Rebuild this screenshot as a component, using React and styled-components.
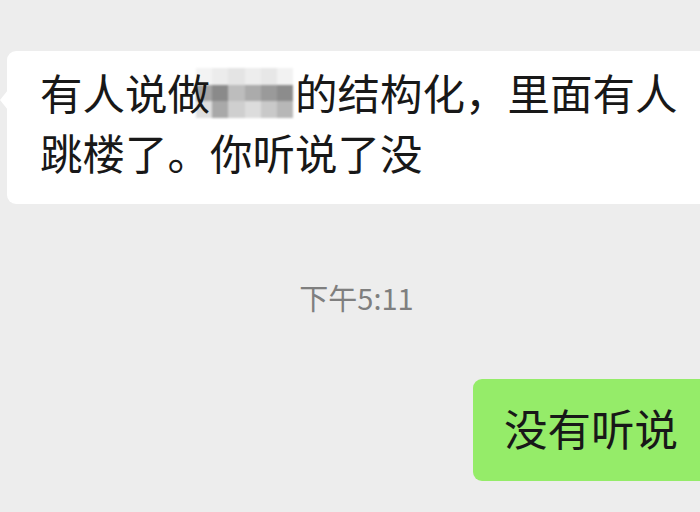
import React from "react"
import styled, { createGlobalStyle } from "styled-components"

const GlobalStyle = createGlobalStyle`
  html, body {
    margin: 0;
    background: #ededed;
  }
  #root {
    width: 700px;
    height: 512px;
    overflow: hidden;
  }
`

const Chat = styled.div`
  font-family: "Noto Sans CJK SC", "Noto Sans", sans-serif;
  padding-top: 51px;
  display: flex;
  flex-direction: column;
`

const Row = styled.div`
  display: flex;
  justify-content: ${(p) => (p.$mine ? "flex-end" : "flex-start")};
  margin-right: ${(p) => (p.$mine ? "-9px" : "0")};
`

const Bubble = styled.div`
  position: relative;
  z-index: 0;
  flex: none;
  font-size: ${(p) => (p.$mine ? "43.5px" : "42.5px")};
  line-height: 60px;
  color: #181818;
  border-radius: 9px;
  background: ${(p) => (p.$mine ? "#95ec69" : "#ffffff")};
  padding: ${(p) => (p.$mine ? "19px 31px 23px 31px" : "11px 40px 22px 33px")};
  margin-left: ${(p) => (p.$mine ? "0" : "7px")};
  width: ${(p) => (p.$mine ? "auto" : "660px")};

  &::before {
    content: "";
    display: ${(p) => (p.$mine ? "none" : "block")};
    position: absolute;
    left: -7px;
    top: 39px;
    border-style: solid;
    border-width: 10px 8px 10px 0;
    border-color: transparent #ffffff transparent transparent;
  }
`

/* blurred-out word: sits behind the glyph of 做 it overlaps */
const Mosaic = styled.span`
  position: relative;
  z-index: -1;
  display: inline-block;
  vertical-align: top;
  width: 97px;
  height: 60px;
  margin-left: -14px;
  margin-right: 2px;
  padding-top: 6px;
  box-sizing: border-box;
`

const MosaicGrid = styled.span`
  display: grid;
  grid-template-columns: repeat(6, 1fr);
  grid-template-rows: repeat(3, 1fr);
  height: 50px;
  filter: blur(1.2px);
`

const Cell = styled.span`
  background: ${(p) => p.$c};
`

const Time = styled.div`
  margin-top: 73px;
  margin-bottom: 62px;
  text-align: center;
  padding-left: 13px;
  font-size: 29px;
  line-height: 40px;
  color: #7f7f7f;
`

const mosaicColors = [
  "#f3f3f3", "#ececec", "#e4e4e4", "#ededed", "#e7e7e7", "#f2f2f2",
  "#a4a4a4", "#8a8a8a", "#bdbdbd", "#ababab", "#9a9a9a", "#8c8c8c",
  "#dedede", "#a9a9a9", "#cfcfcf", "#dcdcdc", "#c9c9c9", "#b7b7b7",
]

export default function App() {
  return (
    <>
      <GlobalStyle />
      <Chat>
        <Row>
          <Bubble>
            有人说做
            <Mosaic>
              <MosaicGrid>
                {mosaicColors.map((c, i) => (
                  <Cell key={i} $c={c} />
                ))}
              </MosaicGrid>
            </Mosaic>
            的结构化，里面有人跳楼了。你听说了没
          </Bubble>
        </Row>
        <Time>下午5:11</Time>
        <Row $mine>
          <Bubble $mine>没有听说</Bubble>
        </Row>
      </Chat>
    </>
  )
}
